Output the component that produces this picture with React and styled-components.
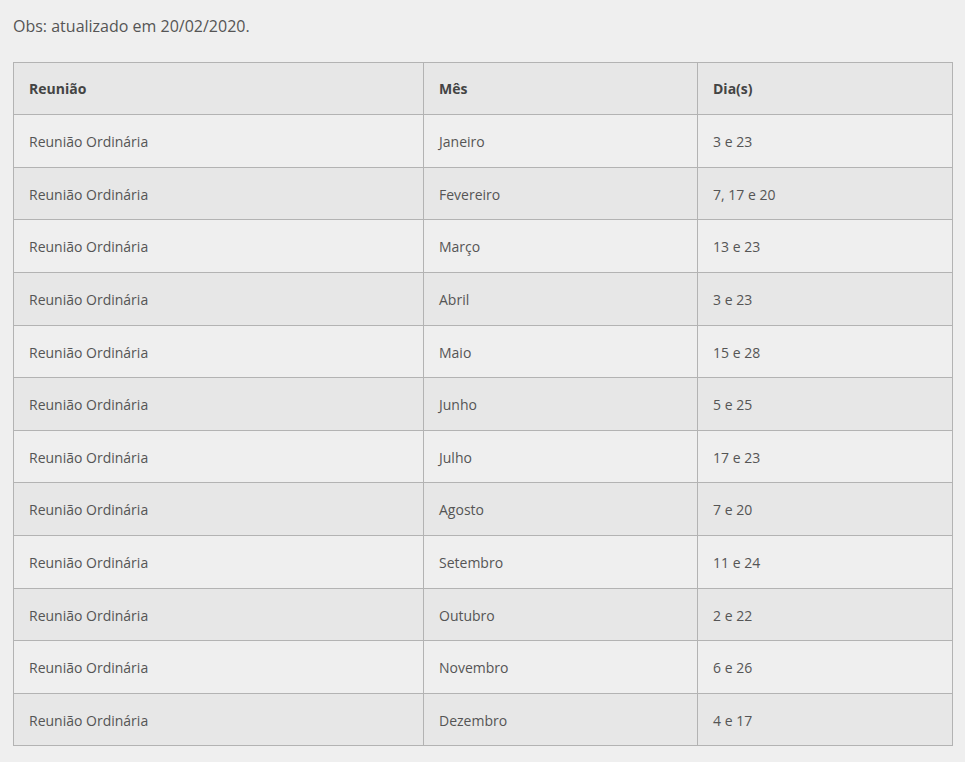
import React from "react";
import styled, { createGlobalStyle } from "styled-components";

const GlobalStyle = createGlobalStyle`
  body {
    margin: 0;
    background: #efefef;
    font-family: "Open Sans", "Liberation Sans", sans-serif;
    color: #555;
  }
`;

const Page = styled.div`
  padding: 14px 13px 15px 13px;
`;

const Note = styled.p`
  margin: 0 0 22px;
  font-size: 16px;
  line-height: 1.6;
  color: #555;
`;

const Table = styled.table`
  width: 939px;
  border-collapse: collapse;
  table-layout: fixed;
  font-size: 14px;
`;

const Row = styled.tr`
  background: ${(props) => (props.shade ? "#e7e7e7" : "#efefef")};
`;

const HeadCell = styled.th`
  text-align: left;
  font-weight: bold;
  color: #444;
  padding: 15px;
  line-height: 21.6px;
  border: 1px solid #b3b3b3;
`;

const Cell = styled.td`
  padding: 16px 15px 14px;
  line-height: 21.6px;
  border: 1px solid #b3b3b3;
  color: #555;
`;

const meetings = [
  ["Janeiro", "3 e 23"],
  ["Fevereiro", "7, 17 e 20"],
  ["Março", "13 e 23"],
  ["Abril", "3 e 23"],
  ["Maio", "15 e 28"],
  ["Junho", "5 e 25"],
  ["Julho", "17 e 23"],
  ["Agosto", "7 e 20"],
  ["Setembro", "11 e 24"],
  ["Outubro", "2 e 22"],
  ["Novembro", "6 e 26"],
  ["Dezembro", "4 e 17"],
];

export default function App() {
  return (
    <Page>
      <GlobalStyle />
      <Note>Obs: atualizado em 20/02/2020.</Note>
      <Table>
        <colgroup>
          <col style={{ width: 410 }} />
          <col style={{ width: 274 }} />
          <col style={{ width: 255 }} />
        </colgroup>
        <thead>
          <Row shade>
            <HeadCell>Reunião</HeadCell>
            <HeadCell>Mês</HeadCell>
            <HeadCell>Dia(s)</HeadCell>
          </Row>
        </thead>
        <tbody>
          {meetings.map(([month, days], i) => (
            <Row key={month} shade={i % 2 === 1}>
              <Cell>Reunião Ordinária</Cell>
              <Cell>{month}</Cell>
              <Cell>{days}</Cell>
            </Row>
          ))}
        </tbody>
      </Table>
    </Page>
  );
}
